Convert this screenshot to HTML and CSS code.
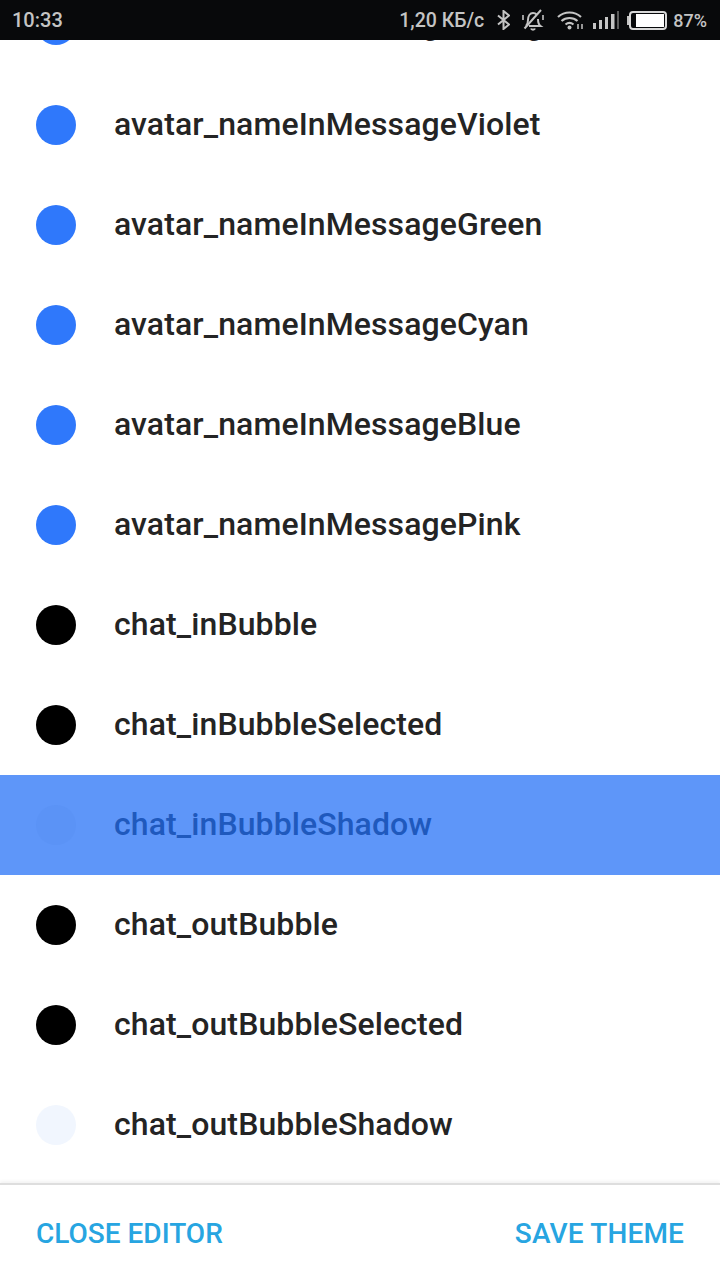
FILE: index.html
```html
<!DOCTYPE html>
<html lang="en">
<head>
    <meta charset="UTF-8">
    <meta name="viewport" content="width=device-width, initial-scale=1.0">
    <title>Theme Editor</title>
    <link rel="stylesheet" href="styles.css">
</head>
<body>
    <div class="status-bar">
        <span class="clock">10:33</span>
        <div class="status-right">
            <span class="speed">1,20 КБ/с</span>
            <!-- Bluetooth -->
            <svg class="icon-bt" width="13" height="20" viewBox="0 0 13 20" fill="none" stroke="#c4c4c4" stroke-width="2">
                <path d="M1 5.500l11 9-5.500 4.500V1L12 5.500l-11 9"/>
            </svg>
            <!-- Muted bell -->
            <svg class="icon-bell" width="24" height="22" viewBox="0 0 24 22" fill="none" stroke="#c4c4c4" stroke-width="2">
                <path d="M5 17c1.500-1.500 2-3 2-6 0-4 2-7 5-7 1.500 0 2.800.6 3.700 1.700M17 10c0 3.500.5 5.500 2.500 7H8"/>
                <path d="M10 19.500c.5 1.500 3.500 1.500 4 0"/>
                <path d="M20 1L3.500 19.500"/>
                <path d="M2 6v5M22 6v5" stroke-width="1.600"/>
            </svg>
            <!-- Wifi -->
            <svg class="icon-wifi" width="26" height="20" viewBox="0 0 26 20" fill="none" stroke="#c4c4c4" stroke-width="2.200">
                <path d="M1 7c6.500-6 16.500-6 23 0"/>
                <path d="M4.500 11c4.500-4 11.500-4 16 0"/>
                <path d="M8.500 14.500c2.500-2 5.500-2 8 0"/>
                <circle cx="12.500" cy="17.500" r="2" fill="#c4c4c4" stroke="none"/>
                <path d="M21 14v5M25 14v5" stroke-width="1.500"/>
            </svg>
            <!-- Signal -->
            <svg class="icon-signal" width="26" height="20" viewBox="0 0 26 20" fill="#c4c4c4">
                <rect x="0" y="13" width="3" height="6"/>
                <rect x="6" y="10" width="3" height="9"/>
                <rect x="12" y="7" width="3" height="12"/>
                <rect x="18" y="4" width="3.500" height="15"/>
                <rect x="24" y="1" width="2" height="18" fill="#5a5a5a"/>
            </svg>
            <div class="battery"><div class="battery-fill"></div></div>
            <span class="percent">87%</span>
        </div>
    </div>

    <div class="list-view">
        <ul class="color-list">
            <li class="row"><span class="dot dot-blue"></span><span class="row-name">avatar_nameInMessageOrange</span></li>
            <li class="row"><span class="dot dot-blue"></span><span class="row-name">avatar_nameInMessageViolet</span></li>
            <li class="row"><span class="dot dot-blue"></span><span class="row-name">avatar_nameInMessageGreen</span></li>
            <li class="row"><span class="dot dot-blue"></span><span class="row-name">avatar_nameInMessageCyan</span></li>
            <li class="row"><span class="dot dot-blue"></span><span class="row-name">avatar_nameInMessageBlue</span></li>
            <li class="row"><span class="dot dot-blue"></span><span class="row-name">avatar_nameInMessagePink</span></li>
            <li class="row"><span class="dot dot-black"></span><span class="row-name">chat_inBubble</span></li>
            <li class="row"><span class="dot dot-black"></span><span class="row-name">chat_inBubbleSelected</span></li>
            <li class="row row-active"><span class="dot dot-active"></span><span class="row-name">chat_inBubbleShadow</span></li>
            <li class="row"><span class="dot dot-black"></span><span class="row-name">chat_outBubble</span></li>
            <li class="row"><span class="dot dot-black"></span><span class="row-name">chat_outBubbleSelected</span></li>
            <li class="row"><span class="dot dot-pale"></span><span class="row-name">chat_outBubbleShadow</span></li>
        </ul>
    </div>

    <div class="footer">
        <a class="footer-btn">CLOSE EDITOR</a>
        <a class="footer-btn footer-btn-save">SAVE THEME</a>
    </div>
</body>
</html>
```

FILE: styles.css
```css
/* Theme editor, phone layout */
html, body {
    height: 100%;
}

body {
    display: flex;
    flex-direction: column;
    margin: 0;
    background-color: #fff;
    font-family: Roboto, sans-serif;
    overflow: hidden;
}

/* Status bar */
.status-bar {
    display: flex;
    flex: none;
    justify-content: space-between;
    align-items: center;
    position: relative;
    z-index: 1;
    height: 40px;
    padding: 0 13px 0 12px;
    box-sizing: border-box;
    background-color: #08090b;
    color: #c4c4c4;
    font-weight: 500;
}

.clock {
    font-size: 20px;
}

.status-right {
    display: flex;
    align-items: center;
}

.speed {
    font-size: 19.500px;
}

.icon-bt {
    margin-left: 13px;
}

.icon-bell {
    margin-left: 11px;
}

.icon-wifi {
    margin-left: 12px;
}

.icon-signal {
    margin-left: 10px;
}

.battery {
    display: flex;
    position: relative;
    align-items: center;
    width: 38px;
    height: 19px;
    margin-left: 10px;
    padding: 1px;
    box-sizing: border-box;
    border: 2px solid #d8d8d8;
    border-radius: 4px;
}

/* battery cap, on the left on this phone */
.battery::before {
    content: "";
    position: absolute;
    left: -4px;
    top: 3px;
    width: 2px;
    height: 9px;
    background-color: #c4c4c4;
}

.battery-fill {
    width: 87%;
    height: 100%;
    margin-left: auto;
    background-color: #fff;
}

.percent {
    margin-left: 6px;
    font-size: 18px;
}

/* Color list */
.list-view {
    flex: 1;
    min-height: 0;
    overflow: hidden;
}

.color-list {
    margin: -65px 0 0;
    padding: 0;
    list-style: none;
}

.row {
    display: flex;
    align-items: center;
    height: 100px;
    padding-left: 36px;
}

.row-active {
    background-color: #5e96f9;
}

.dot {
    flex: none;
    width: 40px;
    height: 40px;
    border-radius: 50%;
}

.dot-blue {
    background-color: #2f78fb;
}

.dot-black {
    background-color: #000;
}

.dot-pale {
    background-color: #f1f6fe;
}

.dot-active {
    background-color: #5b93f6;
}

.row-name {
    margin: 0 0 3px 38px;
    font-size: 32px;
    font-weight: 500;
    letter-spacing: 0.1px;
    color: #242424;
}

.row-active .row-name {
    color: #1f59bd;
}

/* Footer */
.footer {
    display: flex;
    flex: none;
    justify-content: space-between;
    align-items: center;
    height: 97px;
    padding: 2px 36px 0;
    box-sizing: border-box;
    border-top: 2px solid #dedede;
    box-shadow: 0 -2px 3px rgba(0, 0, 0, 0.05);
    background-color: #fff;
}

.footer-btn {
    font-size: 28px;
    font-weight: 500;
    color: #27a5e1;
}

.footer-btn-save {
    letter-spacing: 0.15px;
}
```
